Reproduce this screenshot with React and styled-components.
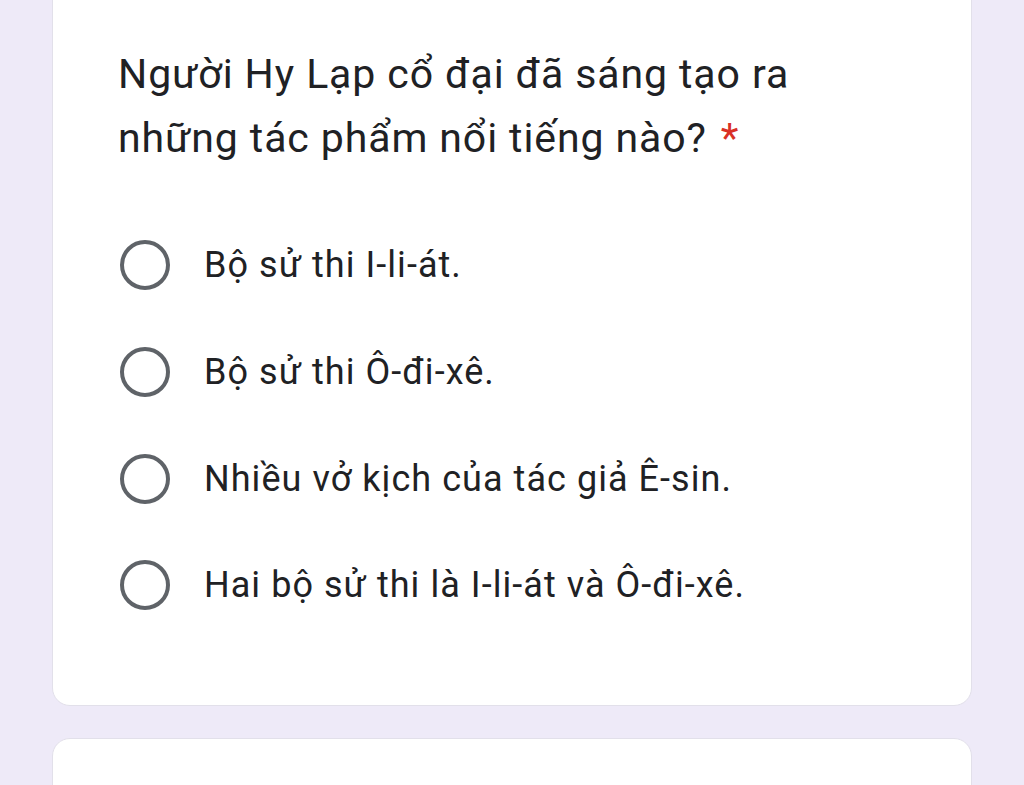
import React from "react";
import styled, { createGlobalStyle } from "styled-components";

const GlobalStyle = createGlobalStyle`
  html, body {
    margin: 0;
    padding: 0;
    background: #eeeaf8;
  }
  body {
    font-family: Roboto, "Noto Sans", sans-serif;
    overflow: hidden;
  }
`;

const Page = styled.div`
  display: flex;
  flex-direction: column;
  gap: 32px;
  padding: 0 52px;
  margin-top: -24px;
  width: 920px;
`;

const Card = styled.div`
  background: #fff;
  border: 1px solid #e2e0ea;
  border-radius: 18px;
  padding: ${(p) => p.$padding || "65px"};
  min-height: ${(p) => p.$minHeight || "auto"};
  box-sizing: border-box;
`;

const Title = styled.div`
  font-size: 41px;
  line-height: 64px;
  color: #202124;
  letter-spacing: 0.9px;
  max-width: 720px;
`;

const Required = styled.span`
  color: #d93025;
  letter-spacing: 0;
  padding-left: 14px;
`;

const Options = styled.div`
  display: flex;
  flex-direction: column;
  margin-top: 42px;
`;

const Option = styled.label`
  display: flex;
  align-items: center;
  height: 106.7px;
  gap: 34px;
  cursor: pointer;
`;

const Radio = styled.span`
  width: 50px;
  height: 50px;
  box-sizing: border-box;
  border: 4px solid #5f6368;
  border-radius: 50%;
  flex-shrink: 0;
  margin-left: 2px;
`;

const OptionText = styled.span`
  font-size: 36px;
  letter-spacing: 1.05px;
  color: #202124;
`;

const options = [
  "Bộ sử thi I-li-át.",
  "Bộ sử thi Ô-đi-xê.",
  "Nhiều vở kịch của tác giả Ê-sin.",
  "Hai bộ sử thi là I-li-át và Ô-đi-xê.",
];

export default function App() {
  return (
    <>
      <GlobalStyle />
      <Page>
        <Card $padding="65px 65px 66px">
          <Title>
            Người Hy Lạp cổ đại đã sáng tạo ra những tác phẩm nổi tiếng nào?
            <Required>*</Required>
          </Title>
          <Options>
            {options.map((o) => (
              <Option key={o}>
                <Radio />
                <OptionText>{o}</OptionText>
              </Option>
            ))}
          </Options>
        </Card>
        <Card $minHeight="200px" />
      </Page>
    </>
  );
}
